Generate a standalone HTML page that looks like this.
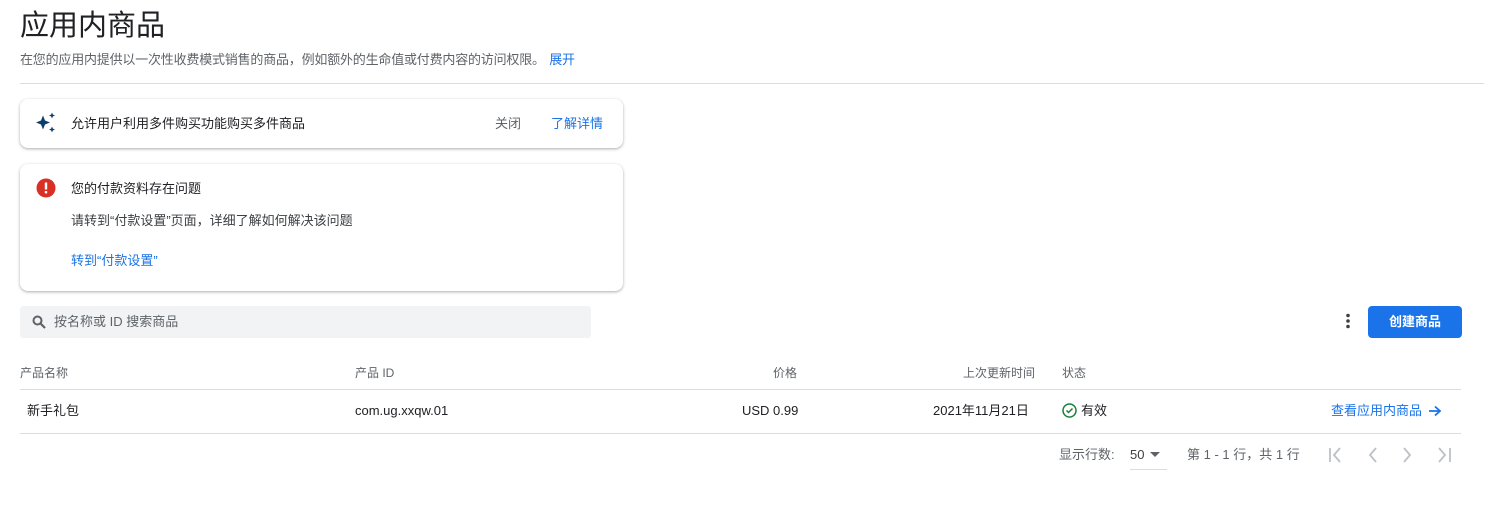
<!DOCTYPE html>
<html><head><meta charset="utf-8"><style>
*{box-sizing:border-box;margin:0;padding:0}
body{width:1488px;height:530px;background:#fff;font-family:"Liberation Sans","Noto Sans CJK SC",sans-serif;color:#202124;position:relative;overflow:hidden}
.a{position:absolute;white-space:nowrap;line-height:16px}
.card{position:absolute;left:20px;width:603px;background:#fff;border-radius:8px;box-shadow:0 1px 3px rgba(60,64,67,.3),0 1px 2px rgba(60,64,67,.15)}
.blue{color:#1a73e8}
.hdr{font-size:12px;color:#5f6368}
.cell{font-size:13px;color:#202124}
</style></head><body>
<div class="a" style="left:20px;top:10px;font-size:29px;line-height:32px;color:#202124">应用内商品</div>
<div class="a" style="left:20px;top:52px;font-size:13px;letter-spacing:-0.2px;color:#5f6368">在您的应用内提供以一次性收费模式销售的商品，例如额外的生命值或付费内容的访问权限。 <span class="blue" style="margin-left:1px">展开</span></div>
<div class="a" style="left:20px;top:83px;width:1464px;height:1px;background:#dadce0"></div>

<div class="card" style="top:99px;height:49px">
<svg class="a" style="left:14px;top:12px" width="24" height="24" viewBox="0 0 24 24" fill="#0b3e6f"><path d="M9 4.5l2 5 5 2-5 2-2 5-2-5-5-2 5-2z"/><path d="M18 1.5l.9 2.1L21 4.5l-2.1.9L18 7.5l-.9-2.1L15 4.5l2.1-.9z"/><path d="M18 15.5l.9 2.1 2.1.9-2.1.9-.9 2.1-.9-2.1-2.1-.9 2.1-.9z"/></svg>
<div class="a" style="left:51px;top:17px;font-size:13px">允许用户利用多件购买功能购买多件商品</div>
<div class="a" style="left:475px;top:17px;font-size:13px;color:#5f6368">关闭</div>
<div class="a blue" style="left:531px;top:17px;font-size:13px">了解详情</div>
</div>

<div class="card" style="top:164px;height:127px">
<svg class="a" style="left:16px;top:14px" width="20" height="20" viewBox="0 0 20 20"><circle cx="10" cy="10" r="9.5" fill="#d93025"/><rect x="8.8" y="4.5" width="2.4" height="7" fill="#fff"/><rect x="8.8" y="13" width="2.4" height="2.4" fill="#fff"/></svg>
<div class="a" style="left:51px;top:17px;font-size:13px">您的付款资料存在问题</div>
<div class="a" style="left:51px;top:49px;font-size:13px;color:#3c4043">请转到“付款设置”页面，详细了解如何解决该问题</div>
<div class="a blue" style="left:51px;top:89px;font-size:13px">转到“付款设置”</div>
</div>

<div class="a" style="left:20px;top:306px;width:571px;height:32px;background:#f1f3f4;border-radius:3px"></div>
<svg class="a" style="left:32px;top:315px" width="14" height="14" viewBox="0 0 14 14"><circle cx="5.5" cy="5.5" r="4" fill="none" stroke="#5f6368" stroke-width="2"/><path d="M8.5 8.5L13 13" stroke="#5f6368" stroke-width="2.2"/></svg>
<div class="a" style="left:54px;top:314px;font-size:13px;color:#5f6368">按名称或 ID 搜索商品</div>

<svg class="a" style="left:1345px;top:313px" width="6" height="16"><circle cx="3" cy="2.5" r="1.8" fill="#3c4043"/><circle cx="3" cy="8" r="1.8" fill="#3c4043"/><circle cx="3" cy="13.5" r="1.8" fill="#3c4043"/></svg>
<div class="a" style="left:1368px;top:306px;width:94px;height:32px;background:#1a73e8;border-radius:4px;color:#fff;font-size:13px;font-weight:bold;text-align:center;line-height:32px">创建商品</div>

<div class="a hdr" style="left:20px;top:365px">产品名称</div>
<div class="a hdr" style="left:355px;top:365px">产品 ID</div>
<div class="a hdr" style="left:773px;top:365px">价格</div>
<div class="a hdr" style="left:963px;top:365px">上次更新时间</div>
<div class="a hdr" style="left:1062px;top:365px">状态</div>
<div class="a" style="left:20px;top:389px;width:1441px;height:1px;background:#dadce0"></div>
<div class="a cell" style="left:27px;top:403px">新手礼包</div>
<div class="a cell" style="left:355px;top:403px">com.ug.xxqw.01</div>
<div class="a cell" style="left:742px;top:403px">USD 0.99</div>
<div class="a cell" style="left:933px;top:403px">2021年11月21日</div>
<svg class="a" style="left:1062px;top:403px" width="15" height="15" viewBox="0 0 15 15"><circle cx="7.5" cy="7.5" r="6.5" fill="none" stroke="#188038" stroke-width="1.5"/><path d="M4.5 7.5l2 2 4-4" fill="none" stroke="#188038" stroke-width="1.5"/></svg>
<div class="a cell" style="left:1081px;top:403px">有效</div>
<div class="a blue" style="left:1331px;top:403px;font-size:13px">查看应用内商品</div>
<svg class="a" style="left:1428px;top:405px" width="14" height="12" viewBox="0 0 14 12"><path d="M1 6h11M7 1.5L12 6 7 10.5" fill="none" stroke="#1a73e8" stroke-width="1.8"/></svg>
<div class="a" style="left:20px;top:433px;width:1441px;height:1px;background:#dadce0"></div>

<div class="a" style="left:1059px;top:447px;font-size:13px;color:#5f6368">显示行数:</div>
<div class="a" style="left:1130px;top:447px;font-size:13px;color:#3c4043">50</div>
<svg class="a" style="left:1150px;top:452px" width="10" height="6"><path d="M0 0h10L5 5z" fill="#5f6368"/></svg>
<div class="a" style="left:1130px;top:469px;width:37px;height:1px;background:#dadce0"></div>
<div class="a" style="left:1187px;top:447px;font-size:13px;color:#5f6368">第 1 - 1 行，共 1 行</div>
<svg class="a" style="left:1326px;top:446px" width="130" height="18" viewBox="0 0 130 18" fill="none" stroke="#bdc1c6" stroke-width="1.8"><path d="M4 2v14M14 2L8 9l6 7"/><path d="M50 2l-6 7 6 7"/><path d="M78 2l6 7-6 7"/><path d="M113 2l6 7-6 7M124 2v14"/></svg>
</body></html>
